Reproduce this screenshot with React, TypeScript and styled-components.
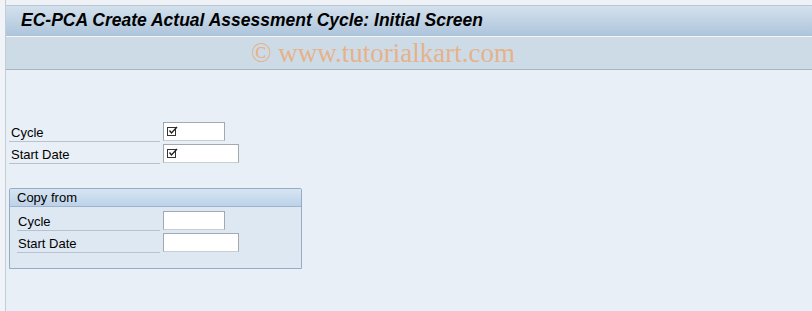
import { FC } from "react";
import styled, { createGlobalStyle } from "styled-components";

type FieldProps = {
  label: string;
  width: number;
  checked?: boolean;
};

const GlobalStyle = createGlobalStyle`
  html, body {
    margin: 0;
    padding: 0;
    background: #f0f3f7;
  }
  #root {
    height: 311px;
  }
`;

const CheckIcon: FC = () => (
  <svg width="11" height="10" viewBox="0 0 11 10">
    <rect x="0.5" y="1.5" width="8" height="8" fill="none" stroke="#333" />
    <path d="M2.5 4.5 L4.5 7 L10 1" fill="none" stroke="#222" strokeWidth="1.4" />
  </svg>
);

const Field: FC<FieldProps> = ({ label, width, checked }) => (
  <Row>
    <Label>{label}</Label>
    <Input $width={width}>{checked && <CheckIcon />}</Input>
  </Row>
);

export default function App() {
  return (
    <>
      <GlobalStyle />
      <Window>
        <TopStrip />
        <TitleBar>
          <Title>EC-PCA Create Actual Assessment Cycle: Initial Screen</Title>
        </TitleBar>
        <Toolbar>
          <Watermark>© www.tutorialkart.com</Watermark>
        </Toolbar>
        <Body>
          <Fields>
            <Field label="Cycle" width={62} checked />
            <Field label="Start Date" width={76} checked />
          </Fields>
          <Group>
            <GroupHeader>Copy from</GroupHeader>
            <GroupFields>
              <Field label="Cycle" width={62} />
              <Field label="Start Date" width={76} />
            </GroupFields>
          </Group>
        </Body>
      </Window>
    </>
  );
}

const Window = styled.div`
  display: flex;
  flex-direction: column;
  height: 311px;
  margin-left: 5px;
  border-left: 1px solid #c4ccd6;
  font-family: "Liberation Sans", Arial, sans-serif;
`;

const TopStrip = styled.div`
  height: 5px;
  background: #eef2f6;
  border-bottom: 1px solid #b9c6d4;
`;

const TitleBar = styled.div`
  height: 30px;
  display: flex;
  align-items: center;
  padding-left: 15px;
  background: linear-gradient(#d4e1ed, #adc4db);
  border-bottom: 1px solid #f2f6fa;
`;

const Title = styled.h1`
  margin: 0 0 2px;
  font-size: 17.5px;
  font-weight: bold;
  font-style: italic;
  color: #000;
`;

const Toolbar = styled.div`
  height: 32px;
  display: flex;
  align-items: center;
  justify-content: center;
  padding-right: 52px;
  background: #cddbe7;
  border-bottom: 1px solid #a9b4c1;
`;

const Watermark = styled.span`
  font-family: "Liberation Serif", "Times New Roman", serif;
  font-size: 27px;
  line-height: 30px;
  color: #e6b28a;
`;

const Body = styled.div`
  flex: 1;
  background: #e8eff6;
  padding: 52px 0 0 3px;
`;

const Fields = styled.div`
  display: flex;
  flex-direction: column;
  gap: 2px;
`;

const Row = styled.div`
  display: flex;
  align-items: flex-start;
  height: 20px;
`;

const Label = styled.span`
  width: 151px;
  height: 20px;
  box-sizing: border-box;
  padding: 3px 0 0 2px;
  font-size: 13px;
  color: #000;
  border-bottom: 1px solid #b9c2cc;
  margin-right: 3px;
`;

const Input = styled.div<{ $width: number }>`
  width: ${(p) => p.$width}px;
  height: 19px;
  box-sizing: border-box;
  background: #fff;
  border: 1px solid #a3a9b0;
  border-bottom-color: #c9ced4;
  padding: 3px 0 0 3px;
  display: flex;
  align-items: flex-start;
`;

const Group = styled.div`
  width: 293px;
  height: 81px;
  margin-top: 24px;
  border: 1px solid #96abc8;
  border-radius: 2px 2px 0 0;
  background: #dde8f2;
  box-sizing: border-box;
`;

const GroupHeader = styled.div`
  height: 16px;
  box-sizing: border-box;
  padding: 1px 0 0 7px;
  font-size: 13px;
  line-height: 15px;
  color: #000;
  background: linear-gradient(#d7e5f2, #bcd2e8);
  border-bottom: 1px solid #9fb3cc;
  box-sizing: content-box;
`;

const GroupFields = styled.div`
  display: flex;
  flex-direction: column;
  gap: 2px;
  padding: 4px 0 0 7px;

  ${Label} {
    width: 143px;
    padding-left: 1px;
  }
`;
